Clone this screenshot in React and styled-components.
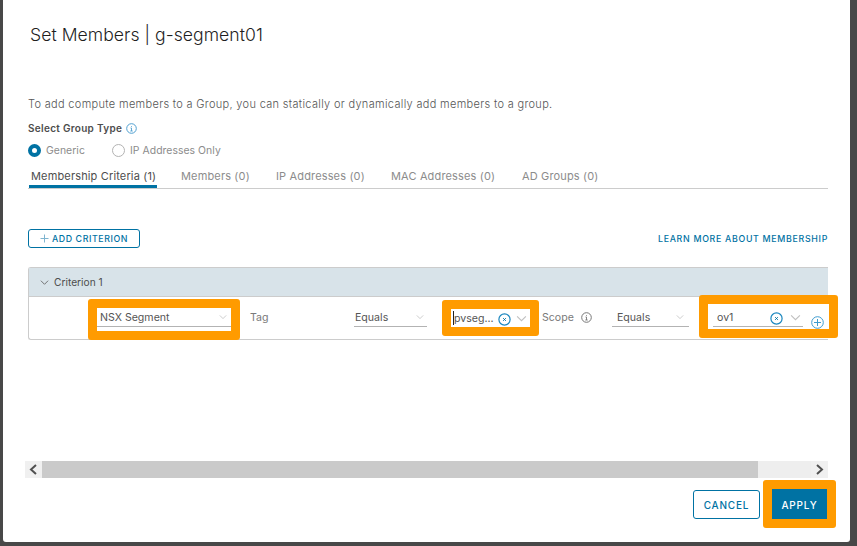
import React from "react";
import styled, { createGlobalStyle } from "styled-components";

const GlobalStyle = createGlobalStyle`
  html, body {
    margin: 0;
    padding: 0;
    background: #484848;
  }
  body {
    font-family: "Inter", "Liberation Sans", sans-serif;
  }
`;

const Backdrop = styled.div`
  width: 857px;
  height: 546px;
  background: #484848;
  padding: 0 7px 4px 3px;
  box-sizing: border-box;
  overflow: hidden;
`;

const Modal = styled.div`
  height: 542px;
  background: #fff;
  border-radius: 0 0 3px 3px;
  padding: 0 22px 0 25px;
  box-sizing: border-box;
  display: flex;
  flex-direction: column;
`;

const Title = styled.h3`
  margin: 0;
  padding: 24px 0 0 2px;
  height: 74px;
  box-sizing: border-box;
  font-size: 17.6px;
  line-height: 22px;
  letter-spacing: 0.04px;
  font-weight: 300;
  color: #1f1f1f;
`;

const Intro = styled.p`
  margin: 0;
  padding-top: 22px;
  font-size: 11px;
  line-height: 16px;
  letter-spacing: 0.32px;
  font-weight: 300;
  color: #555;
`;

const GroupLabel = styled.div`
  display: flex;
  align-items: center;
  gap: 4px;
  margin-top: 8px;
  font-size: 10px;
  line-height: 16px;
  letter-spacing: 0.3px;
  font-weight: 600;
  color: #4d4d4d;
`;

const RadioRow = styled.div`
  display: flex;
  align-items: center;
  height: 16px;
  margin-top: 6px;
  font-size: 10.4px;
  letter-spacing: 0.05px;
  color: #8c8c8c;
`;

const Radio = styled.span`
  width: 13px;
  height: 13px;
  box-sizing: border-box;
  border-radius: 50%;
  margin-right: 5px;
  flex-shrink: 0;
  border: ${(p) => (p.$on ? "4.5px solid #0072a3" : "1px solid #b3b3b3")};
  background: #fff;
`;

const RadioText = styled.span`
  width: ${(p) => p.$w}px;
`;

const Tabs = styled.div`
  display: flex;
  height: 30px;
  border-bottom: 1px solid #ccc;
`;

const Tab = styled.div`
  box-sizing: border-box;
  width: ${(p) => p.$w}px;
  height: 30px;
  padding: 10px 0 0 ${(p) => p.$pad || 0}px;
  font-size: 11px;
  line-height: 16px;
  letter-spacing: 0.15px;
  white-space: nowrap;
  color: ${(p) => (p.$active ? "#4d4d4d" : "#8c8c8c")};
`;

const ActiveTab = styled(Tab)`
  border-bottom: 3px solid #0072a3;
  margin-left: 1px;
  margin-right: 24px;
`;

const Actions = styled.div`
  display: flex;
  align-items: center;
  justify-content: space-between;
  margin-top: 39px;
  height: 20px;
`;

const AddButton = styled.div`
  display: flex;
  align-items: center;
  justify-content: center;
  gap: 3px;
  width: 112px;
  height: 19px;
  box-sizing: border-box;
  border: 1px solid #0072a3;
  border-radius: 3px;
  color: #0072a3;
  font-size: 8.8px;
  font-weight: 500;
  letter-spacing: 0.6px;
`;

const LearnMore = styled.div`
  color: #0072a3;
  font-size: 8.8px;
  font-weight: 500;
  letter-spacing: 0.7px;
`;

const Criteria = styled.div`
  margin-top: 19px;
  height: 73px;
  box-sizing: border-box;
  border: 1px solid #ccc;
  border-right: none;
  border-radius: 3px 0 0 3px;
`;

const CriterionHeader = styled.div`
  display: flex;
  align-items: center;
  gap: 5px;
  height: 29px;
  padding-left: 11px;
  background: #d8e3e9;
  border-bottom: 1px solid #ccc;
  box-sizing: border-box;
  font-size: 10.2px;
  color: #4d4d4d;
`;

const CriterionRow = styled.div`
  display: flex;
  align-items: flex-start;
  height: 42px;
  font-size: 10.6px;
  color: #555;
`;

const Highlight = styled.div`
  flex-shrink: 0;
  box-sizing: border-box;
  width: ${(p) => p.$w}px;
  height: ${(p) => p.$h}px;
  margin-left: ${(p) => p.$left}px;
  margin-top: ${(p) => p.$top}px;
  border: 9px solid #ff9b00;
  border-radius: 3px;
  background: #fff;
  position: relative;
`;

const SelectBox = styled.div`
  flex-shrink: 0;
  display: flex;
  align-items: center;
  box-sizing: border-box;
  width: ${(p) => p.$w}px;
  height: 19px;
  padding: 0 ${(p) => p.$right || 0}px 0 ${(p) => p.$pad || 0}px;
  margin-top: ${(p) => p.$top || 0}px;
  margin-left: ${(p) => p.$left || 0}px;
  border-bottom: ${(p) => (p.$bare ? "none" : "1px solid #b3b3b3")};
  color: #555;
  white-space: nowrap;
`;

const Grow = styled.span`
  flex: 1;
  white-space: nowrap;
`;

const ClearSlot = styled.span`
  display: flex;
  margin-top: 2px;
  margin-right: ${(p) => p.$gap}px;
`;

const FieldLabel = styled.div`
  flex-shrink: 0;
  display: flex;
  align-items: center;
  gap: 7px;
  box-sizing: border-box;
  width: ${(p) => p.$w}px;
  height: 16px;
  margin-top: 12px;
  margin-left: ${(p) => p.$left}px;
  color: #7a7a7a;
`;

const Caret = styled.span`
  position: absolute;
  left: 2px;
  top: 2px;
  width: 1px;
  height: 14px;
  background: #222;
`;

const PlusSlot = styled.span`
  position: absolute;
  right: 5px;
  top: 12px;
  display: flex;
`;

const Spacer = styled.div`
  flex: 1;
`;

const ScrollBar = styled.div`
  display: flex;
  height: 17px;
  margin-left: -3px;
  background: #eee;
`;

const ScrollEnd = styled.div`
  display: flex;
  align-items: center;
  justify-content: center;
  width: 17px;
  flex-shrink: 0;
  background: #f0f0f0;
`;

const ScrollThumb = styled.div`
  width: 716px;
  background: #cacaca;
`;

const ScrollGap = styled.div`
  flex: 1;
`;

const Footer = styled.div`
  display: flex;
  align-items: flex-start;
  height: 64px;
  padding-top: 2px;
  box-sizing: border-box;
  margin-right: -8px;
`;

const CancelButton = styled.div`
  display: flex;
  align-items: center;
  justify-content: center;
  width: 67px;
  height: 29px;
  margin-top: 10px;
  margin-left: auto;
  box-sizing: border-box;
  border: 1px solid #0072a3;
  border-radius: 3px;
  color: #0072a3;
  font-size: 10px;
  font-weight: 500;
  letter-spacing: 0.8px;
`;

const ApplyHighlight = styled.div`
  box-sizing: border-box;
  width: 73px;
  height: 48px;
  margin-left: 3px;
  border: 9px solid #ff9b00;
  border-radius: 3px;
`;

const ApplyButton = styled.div`
  display: flex;
  align-items: center;
  justify-content: center;
  box-sizing: border-box;
  height: 100%;
  padding-top: 2px;
  background: #0072a3;
  color: #fff;
  font-size: 10px;
  font-weight: 500;
  letter-spacing: 0.8px;
`;

const Chevron = ({ size = 9, color = "#c0c0c0", width = 1 }) => (
  <svg width={size} height={size} viewBox="0 0 10 10" fill="none">
    <path d="M1 3l4 4 4-4" stroke={color} strokeWidth={width} />
  </svg>
);

const Side = ({ dir }) => (
  <svg width="9" height="11" viewBox="0 0 9 11" fill="none">
    <path d={dir === "left" ? "M7 1L2 5.5 7 10" : "M2 1l5 4.5L2 10"} stroke="#505050" strokeWidth="2" />
  </svg>
);

const Info = ({ color }) => (
  <svg width="11" height="11" viewBox="0 0 11 11" fill="none">
    <circle cx="5.5" cy="5.5" r="4.8" stroke={color} />
    <path d="M5.5 3v.8M4.5 5h1v3M4.3 8h2.4" stroke={color} strokeWidth="0.9" />
  </svg>
);

const Clear = () => (
  <svg width="13" height="13" viewBox="0 0 13 13" fill="none">
    <circle cx="6.5" cy="6.5" r="5.6" stroke="#1b87bf" strokeWidth="1.2" />
    <path d="M5.2 5.2l2.6 2.6M7.8 5.2l-2.6 2.6" stroke="#0072a3" strokeWidth="1" />
  </svg>
);

const PlusCircle = () => (
  <svg width="13" height="13" viewBox="0 0 13 13" fill="none">
    <circle cx="6.5" cy="6.5" r="5.8" stroke="#3f9ccf" />
    <path d="M6.5 3v7M3 6.5h7" stroke="#3f9ccf" />
  </svg>
);

const Plus = () => (
  <svg width="9" height="9" viewBox="0 0 9 9" fill="none">
    <path d="M4.5 0.5v8M0.5 4.5h8" stroke="#7fb4cf" />
  </svg>
);

export default function App() {
  return (
    <>
      <GlobalStyle />
      <Backdrop>
        <Modal>
          <Title>Set Members | g-segment01</Title>
          <Intro>To add compute members to a Group, you can statically or dynamically add members to a group.</Intro>
          <GroupLabel>
            Select Group Type <Info color="#4f9fd0" />
          </GroupLabel>
          <RadioRow>
            <Radio $on />
            <RadioText $w={66}>Generic</RadioText>
            <Radio />
            <RadioText $w={120}>IP Addresses Only</RadioText>
          </RadioRow>
          <Tabs>
            <ActiveTab $active $w={128} $pad={2}>Membership Criteria (1)</ActiveTab>
            <Tab $w={95}>Members (0)</Tab>
            <Tab $w={115}>IP Addresses (0)</Tab>
            <Tab $w={131}>MAC Addresses (0)</Tab>
            <Tab $w={100}>AD Groups (0)</Tab>
          </Tabs>
          <Actions>
            <AddButton>
              <Plus /> ADD CRITERION
            </AddButton>
            <LearnMore>LEARN MORE ABOUT MEMBERSHIP</LearnMore>
          </Actions>
          <Criteria>
            <CriterionHeader>
              <Chevron color="#666" />
              Criterion 1
            </CriterionHeader>
            <CriterionRow>
              <Highlight $w={152} $h={41} $left={59} $top={2}>
                <SelectBox $w={134} $pad={3} $right={4}>
                  <Grow>NSX Segment</Grow>
                  <Chevron size={8} />
                </SelectBox>
              </Highlight>
              <FieldLabel $w={104} $left={10}>Tag</FieldLabel>
              <SelectBox $w={73} $top={11} $pad={1} $right={3}>
                <Grow>Equals</Grow>
                <Chevron size={8} />
              </SelectBox>
              <Highlight $w={97} $h={36} $left={15} $top={3}>
                <Caret />
                <SelectBox $w={79} $pad={3} $right={3} $bare>
                  <Grow>pvseg...</Grow>
                  <ClearSlot $gap={5}>
                    <Clear />
                  </ClearSlot>
                  <Chevron size={11} />
                </SelectBox>
              </Highlight>
              <FieldLabel $w={70} $left={3}>
                Scope <Info color="#777" />
              </FieldLabel>
              <SelectBox $w={77} $top={11} $pad={5} $right={5}>
                <Grow>Equals</Grow>
                <Chevron size={8} />
              </SelectBox>
              <Highlight $w={139} $h={43} $left={10} $top={-2}>
                <SelectBox $w={90} $left={5} $top={4} $pad={4} $right={2}>
                  <Grow>ov1</Grow>
                  <ClearSlot $gap={7}>
                    <Clear />
                  </ClearSlot>
                  <Chevron size={11} />
                </SelectBox>
                <PlusSlot>
                  <PlusCircle />
                </PlusSlot>
              </Highlight>
            </CriterionRow>
          </Criteria>
          <Spacer />
          <ScrollBar>
            <ScrollEnd>
              <Side dir="left" />
            </ScrollEnd>
            <ScrollThumb />
            <ScrollGap />
            <ScrollEnd>
              <Side dir="right" />
            </ScrollEnd>
          </ScrollBar>
          <Footer>
            <CancelButton>CANCEL</CancelButton>
            <ApplyHighlight>
              <ApplyButton>APPLY</ApplyButton>
            </ApplyHighlight>
          </Footer>
        </Modal>
      </Backdrop>
    </>
  );
}
